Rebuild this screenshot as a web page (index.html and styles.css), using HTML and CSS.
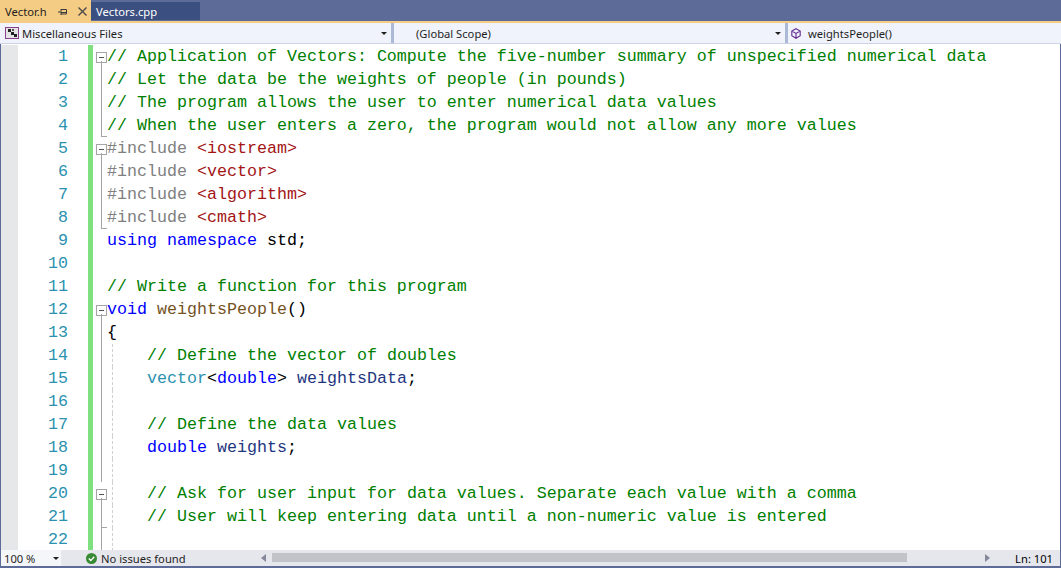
FILE: index.html
```html
<!DOCTYPE html>
<html lang="en">
<head>
<meta charset="utf-8">
<title>Vector.h</title>
<link rel="stylesheet" href="styles.css">
</head>
<body>
<div class="window">
  <div class="tabs">
    <div class="tab active"><span class="tab-name">Vector.h</span>
      <svg class="pin" width="9" height="8" viewBox="0 0 9 8"><path d="M0 4h2.5M3 1v6M3 1.5h5.5v4.5H3M3 4.500h5" fill="none" stroke="#3a3a3a"/></svg>
      <svg class="close" width="9" height="9" viewBox="0 0 9 9"><path d="M.5.5l8 8M8.500.5l-8 8" fill="none" stroke="#4a4a4a" stroke-width="1.4"/></svg>
    </div>
    <div class="tab inactive">Vectors.cpp</div>
  </div>
  <div class="navbar">
    <div class="combo first">
      <svg class="proj" width="14" height="12" viewBox="0 0 14 12"><rect x="0.5" y="0.5" width="13" height="11" fill="#e4e4e6" stroke="#8c3f8c"/><path d="M3 2h3v3H3zM6 5h3v3H6zM9 7h3v3H9z" fill="#222"/><path d="M7 2h2v2H7z" fill="#555"/></svg>
      <span>Miscellaneous Files</span><i class="caret"></i>
    </div>
    <div class="combo second"><span>(Global Scope)</span><i class="caret"></i></div>
    <div class="combo third">
      <svg class="cube" width="10" height="11" viewBox="0 0 10 11"><path d="M5 .7l4.200 2.300v4.800L5 10.300.8 7.800V3zM.8 3L5 5.400 9.200 3M5 5.400v4.900" fill="none" stroke="#652d90" stroke-width="1.100"/></svg>
      <span>weightsPeople()</span>
    </div>
  </div>
  <div class="editor">
    <div class="row"><b class="ln">1</b><i class="bar"></i><i class="fold open"></i><code class="c">// Application of Vectors: Compute the five-number summary of unspecified numerical data</code></div>
    <div class="row"><b class="ln">2</b><i class="bar"></i><i class="fold line"></i><code class="c">// Let the data be the weights of people (in pounds)</code></div>
    <div class="row"><b class="ln">3</b><i class="bar"></i><i class="fold line"></i><code class="c">// The program allows the user to enter numerical data values</code></div>
    <div class="row"><b class="ln">4</b><i class="bar"></i><i class="fold end"></i><code class="c">// When the user enters a zero, the program would not allow any more values</code></div>
    <div class="row"><b class="ln">5</b><i class="bar"></i><i class="fold open"></i><code><span class="p">#include</span> <span class="s">&lt;iostream&gt;</span></code></div>
    <div class="row"><b class="ln">6</b><i class="bar"></i><i class="fold line"></i><code><span class="p">#include</span> <span class="s">&lt;vector&gt;</span></code></div>
    <div class="row"><b class="ln">7</b><i class="bar"></i><i class="fold line"></i><code><span class="p">#include</span> <span class="s">&lt;algorithm&gt;</span></code></div>
    <div class="row"><b class="ln">8</b><i class="bar"></i><i class="fold end"></i><code><span class="p">#include</span> <span class="s">&lt;cmath&gt;</span></code></div>
    <div class="row"><b class="ln">9</b><i class="bar"></i><i class="fold"></i><code><span class="k">using</span> <span class="k">namespace</span> std;</code></div>
    <div class="row"><b class="ln">10</b><i class="bar"></i><i class="fold"></i><code></code></div>
    <div class="row"><b class="ln">11</b><i class="bar"></i><i class="fold"></i><code class="c">// Write a function for this program</code></div>
    <div class="row"><b class="ln">12</b><i class="bar"></i><i class="fold open"></i><code><span class="k">void</span> <span class="f">weightsPeople</span>()</code></div>
    <div class="row"><b class="ln">13</b><i class="bar"></i><i class="fold line"></i><code>{</code></div>
    <div class="row"><b class="ln">14</b><i class="bar"></i><i class="fold line"></i><i class="guide"></i><code class="c">// Define the vector of doubles</code></div>
    <div class="row"><b class="ln">15</b><i class="bar"></i><i class="fold line"></i><i class="guide"></i><code><span class="t">vector</span>&lt;<span class="k">double</span>&gt; <span class="v">weightsData</span>;</code></div>
    <div class="row"><b class="ln">16</b><i class="bar"></i><i class="fold line"></i><i class="guide"></i><code></code></div>
    <div class="row"><b class="ln">17</b><i class="bar"></i><i class="fold line"></i><i class="guide"></i><code class="c">// Define the data values</code></div>
    <div class="row"><b class="ln">18</b><i class="bar"></i><i class="fold line"></i><i class="guide"></i><code><span class="k">double</span> <span class="v">weights</span>;</code></div>
    <div class="row"><b class="ln">19</b><i class="bar"></i><i class="fold line"></i><i class="guide"></i><code></code></div>
    <div class="row"><b class="ln">20</b><i class="bar"></i><i class="fold open inner"></i><i class="guide"></i><code class="c">// Ask for user input for data values. Separate each value with a comma</code></div>
    <div class="row"><b class="ln">21</b><i class="bar"></i><i class="fold end"></i><i class="guide"></i><code class="c">// User will keep entering data until a non-numeric value is entered</code></div>
    <div class="row"><b class="ln">22</b><i class="bar"></i><i class="fold line"></i><i class="guide"></i><code></code></div>
  </div>
  <div class="status">
    <div class="zoom"><span>100 %</span><i class="caret"></i></div>
    <div class="issues">
      <svg width="11" height="11" viewBox="0 0 11 11"><circle cx="5.500" cy="5.500" r="5.500" fill="#388a34"/><path d="M2.800 5.600l2 2 3.400-3.800" fill="none" stroke="#fff" stroke-width="1.400"/></svg>
      <span>No issues found</span>
    </div>
    <div class="scroll">
      <i class="arrow left"></i>
      <div class="track"><div class="thumb"></div></div>
      <i class="arrow right"></i>
    </div>
    <div class="pos">Ln: 101</div>
  </div>
</div>
</body>
</html>
```
FILE: styles.css
```css
* { box-sizing: border-box; }
html, body { margin: 0; height: 100%; overflow: hidden; }
body { font-family: "Noto Sans", "Open Sans", sans-serif; font-size: 11.2px; color: #1e1e1e; }
.window { height: 568px; display: flex; flex-direction: column; border-left: 1px solid #5d6b99; border-right: 1px solid #5d6b99; border-bottom: 2px solid #5d6b99; background: #fff; }

.tabs { height: 21px; flex: none; display: flex; align-items: flex-end; background: #5d6b99; margin: 0 -1px; }
.tab { display: flex; align-items: center; }
.tab.active { width: 91px; height: 21px; padding: 2px 0 0 5px; background: #f5cc84; color: #1e1e1e; }
.tab-name { width: 53px; }
.pin { margin-right: 11px; }
.tab.inactive { width: 109px; height: 18px; margin-bottom: 1px; padding-left: 5px; background: #3b4f81; color: #fff; }

.navbar { height: 23px; flex: none; display: flex; background: #f0f3fb; border-top: 2px solid #f5cc84; margin: 0 -1px; border-bottom: 1px solid #ccd3e3; }
.combo { display: flex; align-items: center; }
.combo span { white-space: nowrap; }
.combo.first { width: 394px; padding-left: 5px; border-right: 3px solid #abb8d6; }
.combo.second { width: 394px; padding-left: 22px; border-right: 3px solid #abb8d6; }
.combo.third { flex: 1; padding-left: 3px; }
.proj { margin-right: 3px; }
.cube { margin-right: 7px; }
.caret { display: block; width: 0; height: 0; margin-left: auto; margin-right: 4px; border-left: 3px solid transparent; border-right: 3px solid transparent; border-top: 3px solid #1e1e1e; }

.editor { flex: 1; min-height: 0; overflow: hidden; padding-top: 1px; background: #fff; }
.row { height: 23px; display: flex; font-family: "Liberation Mono", monospace; font-size: 16.67px; line-height: 23px; }
.ln { width: 87px; flex: none; padding-right: 20px; text-align: right; font-weight: normal; color: #2b91af; background: linear-gradient(to right, #e6e7e8 17px, #fff 17px); }
.bar { width: 5px; flex: none; background: #7ee07e; }
.fold { width: 14px; flex: none; position: relative; }
.fold.line::before, .fold.end::before, .fold.open::after { content: ""; position: absolute; left: 8px; width: 1px; background: #a5a5a5; }
.fold.line::before { top: 0; bottom: 0; }
.fold.end::before { top: 0; height: 22px; width: 5px; background: none; border-left: 1px solid #a5a5a5; border-bottom: 1px solid #a5a5a5; }
.fold.open::after { top: 16px; bottom: 0; }
.fold.open::before { content: ""; position: absolute; left: 3px; top: 7px; width: 9px; height: 9px; border: 1px solid #a5a5a5; background: linear-gradient(#555, #555) center / 5px 1px no-repeat #fff; }
.guide { width: 40px; flex: none; position: relative; }
.guide::before { content: ""; position: absolute; left: 5px; top: 0; bottom: 0; border-left: 1px dashed #d0d0d0; }
code { font: inherit; white-space: pre; color: #000; }
.c { color: #008000; }
.p { color: #808080; }
.s { color: #a31515; }
.k { color: #0000ff; }
.f { color: #74531f; }
.t { color: #2b91af; }
.v { color: #1f377f; }

.status { height: 16px; flex: none; display: flex; align-items: center; background: #e6e7ed; }
.zoom { width: 60px; height: 16px; display: flex; align-items: center; padding-left: 3px; background: #f5f6fa; }
.zoom .caret { margin-right: 2px; }
.issues { width: 172px; display: flex; align-items: center; gap: 4px; padding-left: 25px; white-space: nowrap; }
.scroll { width: 729px; margin-left: 28px; display: flex; align-items: center; }
.track { flex: 1; height: 10px; margin: 0 5px; }
.thumb { width: 635px; height: 9px; margin-left: 1px; background: #c2c3c9; }
.arrow { width: 0; height: 0; border-top: 4px solid transparent; border-bottom: 4px solid transparent; }
.arrow.left { border-right: 5px solid #868999; }
.arrow.right { border-left: 5px solid #868999; }
.pos { margin-left: auto; padding-right: 7px; color: #000; }
```
